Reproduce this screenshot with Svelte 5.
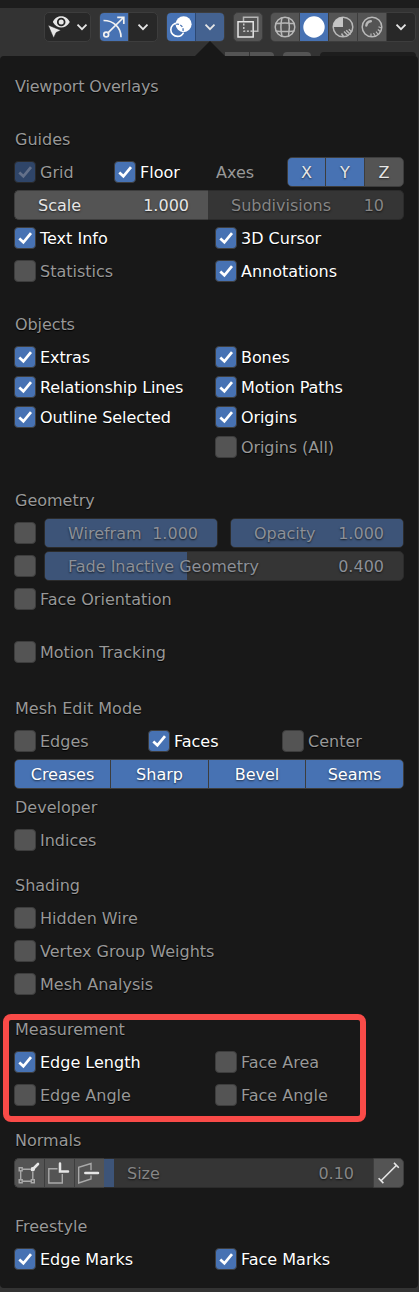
<script>
  const shading = ['wire', 'solid', 'material', 'rendered'];
</script>

{#snippet check(label, on = false, dim = false)}
  <label class="check" class:on class:dim>
    <span class="box">
      {#if on}
        <svg width="20" height="20" viewBox="0 0 20 20"><path d="M4.3 10.4 8.4 14.3 16 5.2" /></svg>
      {/if}
    </span>
    {#if label}<span class="name">{label}</span>{/if}
  </label>
{/snippet}

{#snippet slider(label, value, fill, kind = '')}
  <div class="slider {kind}">
    <div class="fill" style:width="{fill}px"></div>
    <span>{label}</span><span>{value}</span>
  </div>
{/snippet}

{#snippet chevron()}
  <svg class="chev" width="12" height="8" viewBox="0 0 12 8"><path d="M1.5 1.7 6 6.2 10.5 1.7" /></svg>
{/snippet}

<div class="page">
  <div class="strip"></div>
  <header>
    <div class="group g1">
      <svg width="28" height="28" viewBox="45 13 28 28">
        <path fill="#e6e6e6" fill-rule="evenodd" d="M52.8 22C55 17.8 58 16.2 61.2 16.2S67.6 17.8 69.8 22C67.6 26 64.4 27.6 61.2 27.6S55 26 52.8 22ZM61.2 17.7a4.3 4.3 0 1 0 0 8.6a4.3 4.3 0 1 0 0-8.6Z" />
        <circle cx="61.2" cy="22" r="2.5" fill="#e6e6e6" />
        <path fill="#e6e6e6" stroke="#282828" stroke-width=".6" d="M48 25 61 30.3 56.2 32.5 53.6 38Z" />
      </svg>
      <i class="c1">{@render chevron()}</i>
    </div>
    <div class="group g2">
      <div class="cell blue">
        <svg width="28" height="28" viewBox="100 13 28 28" fill="none" stroke="#f1f1f1" stroke-width="1.7">
          <path d="M103.5 20.5C113.5 20.5 121 27.5 121 37.3M108.2 32.7 123.5 17.5M117.2 17.4H123.8V24" />
          <circle cx="106.2" cy="34.5" r="2.4" />
        </svg>
      </div>
      <div class="cell end">{@render chevron()}</div>
    </div>
    <div class="group g2">
      <div class="cell blue">
        <svg width="28" height="28" viewBox="167 13 28 28">
          <circle cx="177.5" cy="29.7" r="6.7" fill="none" stroke="#fff" stroke-width="1.6" stroke-dasharray="35 7" stroke-dashoffset="-3" />
          <circle cx="183.6" cy="24.2" r="8" fill="#fff" />
          <path d="M176.2 24.3A5.7 5.7 0 0 1 183 31" fill="none" stroke="#4772b3" stroke-width="1.3" stroke-dasharray="2.8 1.4" />
        </svg>
      </div>
      <div class="cell end open">{@render chevron()}</div>
    </div>
    <div class="group single">
      <svg width="28" height="28" viewBox="234 13 28 28" fill="none">
        <path d="M243.5 21.5V17.3H257.8V31.2H254" stroke="#b5b5b5" stroke-width="1.5" />
        <path d="M238 21.8H253.2V37H238Z" stroke="#e6e6e6" stroke-width="1.5" />
        <path d="M243.8 23.5V31.2H252.5" stroke="#dcdcdc" stroke-width="1.3" stroke-dasharray="2 1.6" />
      </svg>
    </div>
    <div class="group shade">
      {#each shading as mode}
        <div class="cell" class:blue={mode === 'solid'}>
          <svg width="28" height="28" viewBox="-14 -14 28 28" fill="none" stroke="#b8b8b8" stroke-width="1.5">
            {#if mode === 'wire'}
              <circle r="9.8" /><path d="M-9.3-3.5Q0-4.7 9.3-3.5M-9.3 4Q0 5.2 9.3 4M-3-9.3Q-5.2 0-3 9.3M3.5-9.3Q5.2 0 3.5 9.3" />
            {:else if mode === 'solid'}
              <circle r="10.7" fill="#fff" stroke="none" />
            {:else if mode === 'material'}
              <circle r="9.8" /><path fill="#c5c5c5" stroke="none" d="M0-10V0H-10A10 10 0 0 1 0-10Z" />
              <path stroke-width="1.5" d="M1 4.5 5.5 9M3.2 3.2 7.5 7.5M5.8 2.2 9 5.2M-1.5 6.5.5 9.5" />
            {:else}
              <circle r="9.8" /><path stroke-width="2.5" stroke-linecap="round" d="M-5.6-1.5Q-5.3-5.3-1.2-5.8" />
              <path stroke-width="1.2" d="M-1 6.5V10M1.5 6 3.2 9M4 4.7 6.2 7.5M5.8 2.5 8.6 4.7M6.5-.2 9.5 1" />
            {/if}
          </svg>
        </div>
      {/each}
      <div class="cell last">{@render chevron()}</div>
    </div>
  </header>

  <div class="under"><b></b><b></b><b></b><b></b></div>

  <main>
    <div class="notch"></div>
    <h1>Viewport Overlays</h1>

    <section>
      <h2>Guides</h2>
      <div class="row guides">
        {@render check('Grid', true, true)}
        {@render check('Floor', true)}
        <span class="axes">Axes</span>
        <div class="tabs xyz"><span>X</span><span>Y</span><span class="off">Z</span></div>
      </div>
      <div class="row joined">
        {@render slider('Scale', '1.000', 0, 'scale')}
        {@render slider('Subdivisions', '10', 0, 'subdiv')}
      </div>
      <div class="row two">{@render check('Text Info', true)}{@render check('3D Cursor', true)}</div>
      <div class="row two">{@render check('Statistics')}{@render check('Annotations', true)}</div>
    </section>

    <section class="objects">
      <h2>Objects</h2>
      <div class="row two">{@render check('Extras', true)}{@render check('Bones', true)}</div>
      <div class="row two">{@render check('Relationship Lines', true)}{@render check('Motion Paths', true)}</div>
      <div class="row two">{@render check('Outline Selected', true)}{@render check('Origins', true)}</div>
      <div class="row two"><span></span>{@render check('Origins (All)')}</div>
    </section>

    <section>
      <h2>Geometry</h2>
      <div class="row geo">
        {@render check('')}
        {@render slider('Wirefram', '1.000', 172)}
        {@render slider('Opacity', '1.000', 172, 'opacity')}
      </div>
      <div class="row geo">{@render check('')}{@render slider('Fade Inactive Geometry', '0.400', 142)}</div>
      <div class="row">{@render check('Face Orientation')}</div>
    </section>

    <section><div class="row">{@render check('Motion Tracking')}</div></section>

    <section class="mesh">
      <h2>Mesh Edit Mode</h2>
      <div class="row three">{@render check('Edges')}{@render check('Faces', true)}{@render check('Center')}</div>
      <div class="tabs"><span>Creases</span><span>Sharp</span><span>Bevel</span><span>Seams</span></div>
      <h2>Developer</h2>
      <div class="row">{@render check('Indices')}</div>
    </section>

    <section class="near">
      <h2>Shading</h2>
      <div class="row">{@render check('Hidden Wire')}</div>
      <div class="row">{@render check('Vertex Group Weights')}</div>
      <div class="row">{@render check('Mesh Analysis')}</div>
    </section>

    <section class="near measure">
      <h2>Measurement</h2>
      <div class="row two">{@render check('Edge Length', true)}{@render check('Face Area')}</div>
      <div class="row two">{@render check('Edge Angle')}{@render check('Face Angle')}</div>
      <div class="outline"></div>
    </section>

    <section class="near">
      <h2>Normals</h2>
      <div class="row normals">
        <div class="tool">
          <svg width="29" height="28" viewBox="15 1159 29 28" fill="none" stroke="#a9a9a9" stroke-width="1.4">
            <path d="M22.5 1169.3H30M20.7 1171V1179.5M22.5 1181.3H31M32.8 1172V1179.5" />
            <path d="M19.2 1167.7h3v3h-3ZM19.2 1179.8h3v3h-3ZM31.3 1179.8h3v3h-3Z" />
            <path stroke="#e6e6e6" stroke-width="2.6" stroke-linecap="round" d="M33.5 1168.5 38 1164" /><circle cx="32.7" cy="1169.3" r="2.2" fill="#e6e6e6" stroke="none" />
          </svg>
        </div>
        <div class="tool">
          <svg width="29" height="28" viewBox="45 1159 29 28" fill="none">
            <path d="M57.5 1168.8H48.8V1183H62.3V1174" stroke="#a9a9a9" stroke-width="1.4" />
            <path d="M60 1163.5V1171.4H68" stroke="#e6e6e6" stroke-width="2.5" stroke-linecap="round" />
          </svg>
        </div>
        <div class="tool">
          <svg width="29" height="28" viewBox="75 1159 29 28" fill="none">
            <path d="M91 1170.3V1163.5L78.7 1167.3V1183L91 1179V1175.5" stroke="#a9a9a9" stroke-width="1.4" />
            <path d="M85.3 1173H98" stroke="#e6e6e6" stroke-width="2.5" stroke-linecap="round" />
          </svg>
        </div>
        {@render slider('Size', '0.10', 10, 'size')}
        <div class="tool ruler">
          <svg width="29" height="28" viewBox="374 1159 29 28" fill="none" stroke="#e6e6e6" stroke-width="1.6">
            <path d="M381 1180.8 396.5 1165.3M378.6 1178.3 383.4 1183.1M394 1162.9 398.8 1167.7" />
          </svg>
        </div>
      </div>
    </section>

    <section>
      <h2>Freestyle</h2>
      <div class="row two">{@render check('Edge Marks', true)}{@render check('Face Marks', true)}</div>
    </section>
  </main>
</div>

<style>
  :global(body) { margin: 0; background: #333; }
  * { box-sizing: border-box; }
  svg { display: block; flex: none; }
  .page {
    width: 419px; height: 1292px; overflow: hidden; background: #333;
    display: flex; flex-direction: column;
    font: 16px/30px "DejaVu Sans", sans-serif; color: #989898;
  }
  .strip { height: 8px; background: #1d1d1d; flex: none; }
  header { display: flex; gap: 8px; padding: 4px 0 0 44px; height: 44px; flex: none; }
  .group { display: flex; flex: none; height: 30px; border: 1px solid #3d3d3d; border-radius: 5px; background: #282828; overflow: hidden; }
  .g1 { width: 47px; }
  .g2 { width: 59px; }
  .c1 { display: flex; align-items: center; margin-left: 3px; }
  .cell { width: 28px; flex: none; display: flex; align-items: center; justify-content: center; }
  .cell.blue { background: #4772b3; }
  .g2 .cell.end { width: 29px; border-left: 1px solid #3d3d3d; }
  .g2 .cell.open { background: #446290; border-color: #2c4873; }
  .chev path { fill: none; stroke: #e6e6e6; stroke-width: 1.8; }
  .single { width: 30px; background: #545454; }
  .shade { width: 146px; gap: 1px; background: #3d3d3d; margin-left: -1px; }
  .shade .cell { background: #545454; }
  .shade .cell.blue { background: #4772b3; }
  .shade .last { background: #282828; flex: 1; }
  .under { height: 4px; display: flex; padding-left: 225px; flex: none; }
  .under b { height: 4px; background: #545454; width: 24px; margin-right: 1px; }
  .under b:nth-child(2) { border-radius: 0 4px 0 0; margin-right: 9px; }
  .under b:nth-child(3) { border-radius: 4px 4px 0 0; width: 28px; margin-right: 9px; }
  .under b:nth-child(4) { border-radius: 4px 4px 0 0; width: 96px; background: #1d1d1d; }
  main {
    position: relative; width: 418px; height: 1232px; flex: none;
    padding: 15px 14px 0; background: #181818; border-radius: 4px;
  }
  .notch { position: absolute; left: 195px; top: -15px; border: 15px solid transparent; border-top: 0; border-bottom-color: #181818; }
  h1, h2 { margin: 0; padding: 1px 0 0 1px; font: inherit; text-shadow: 0 1px 1px #000; height: 30px; }
  h1 { letter-spacing: -.18px; }
  section { display: flex; flex-direction: column; gap: 3px; margin-top: 23px; }
  .objects { gap: 0; letter-spacing: -.09px; }
  .objects h2 { margin-bottom: 3px; }
  .mesh { margin-top: 26px; }
  .near { margin-top: 15px; }
  .row { display: flex; height: 30px; }
  .two { display: grid; grid-template-columns: 201px 1fr; }
  .three { display: grid; grid-template-columns: 134px 134px 1fr; }
  .guides .check { width: 100px; }
  .guides .axes { width: 71px; margin-left: 2px; padding-top: 1px; }
  .check { display: flex; align-items: center; gap: 4px; height: 30px; text-shadow: 0 1px 1px #000; white-space: nowrap; }
  .name { padding-top: 2px; }
  .box { width: 22px; height: 22px; flex: none; border: 1px solid #3d3d3d; border-radius: 4px; background: #545454; }
  .on { color: #fff; }
  .on .box { background: #4772b3; }
  .box path { fill: none; stroke: #fff; stroke-width: 2.7; }
  .dim { color: #989898; }
  .dim .box { background: #2f4568; border-color: #292929; }
  .dim path { stroke: #64718a; }
  .tabs {
    display: grid; grid-template-columns: 95px 97px 96px 1fr; gap: 1px; width: 390px; height: 30px; line-height: 30px;
    border: 1px solid #3d3d3d; border-radius: 5px; background: #3d3d3d; overflow: hidden;
    text-align: center; color: #fff; text-shadow: 0 1px 2px #0009;
  }
  .tabs span { background: #4772b3; }
  .xyz { width: 117px; grid-template-columns: 37px 38px 1fr; color: #e6e6e6; }
  .tabs .off { background: #545454; }
  .slider {
    position: relative; display: flex; justify-content: space-between; flex: 1; height: 30px; line-height: 30px;
    padding: 0 19px 0 23px; border: 1px solid #2b2b2b; border-radius: 5px; background: #353535; overflow: hidden;
    color: #868686; text-shadow: 0 1px 2px #000a; white-space: nowrap;
  }
  .slider span { position: relative; }
  .fill { position: absolute; inset: 0 auto 0 0; background: #3d5478; }
  .geo .check { width: 30px; }
  .geo .slider { color: #8c9098; flex: 1; }
  .geo .opacity { margin-left: 12px; }
  .slider.scale { flex: none; width: 194px; background: #545454; border-color: #3d3d3d; border-right: 0; border-radius: 5px 0 0 5px; color: #e6e6e6; }
  .slider.subdiv { border-left: 0; border-radius: 0 5px 5px 0; }
  .tool { flex: none; width: 30px; height: 30px; background: #545454; border: 1px solid #3d3d3d; border-right: 0; }
  .tool:first-child { border-radius: 5px 0 0 5px; }
  .tool.ruler { width: 31px; border-right: 1px solid #3d3d3d; border-radius: 0 5px 5px 0; }
  .slider.size { border-radius: 0; border-width: 1px 0; padding-left: 23px; }
  .measure { position: relative; }
  .outline { position: absolute; left: -11px; top: 0; width: 363px; height: 108px; border: 6px solid #f94b48; border-radius: 8px; }
</style>
